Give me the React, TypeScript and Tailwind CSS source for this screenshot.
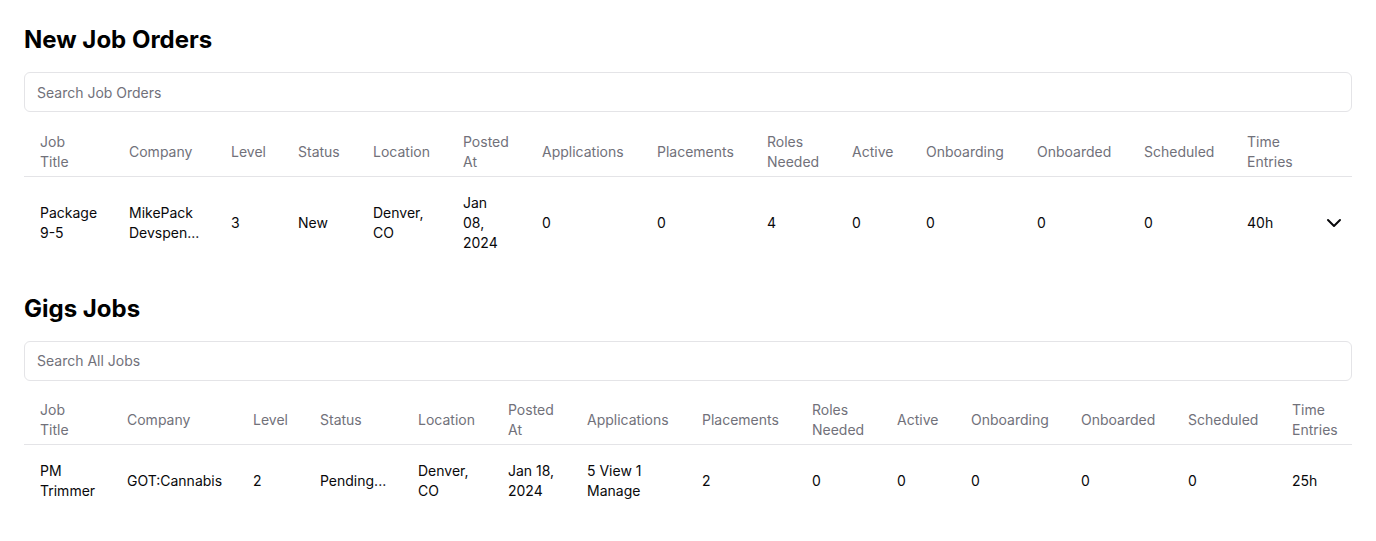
import React from 'react';
import { ChevronDown } from 'lucide-react';

interface JobRow {
  title: string;
  company: string;
  level: string;
  status: string;
  location: string;
  postedAt: string;
  applications: string;
  placements: string;
  rolesNeeded: string;
  active: string;
  onboarding: string;
  onboarded: string;
  scheduled: string;
  timeEntries: string;
}

const headers: React.ReactNode[] = [
  <>Job<br />Title</>,
  'Company',
  'Level',
  'Status',
  'Location',
  <>Posted<br />At</>,
  'Applications',
  'Placements',
  <>Roles<br />Needed</>,
  'Active',
  'Onboarding',
  'Onboarded',
  'Scheduled',
  <>Time<br />Entries</>,
];

const jobOrders: JobRow[] = [
  {
    title: 'Package 9-5',
    company: 'MikePack Devspen...',
    level: '3',
    status: 'New',
    location: 'Denver, CO',
    postedAt: 'Jan 08, 2024',
    applications: '0',
    placements: '0',
    rolesNeeded: '4',
    active: '0',
    onboarding: '0',
    onboarded: '0',
    scheduled: '0',
    timeEntries: '40h',
  },
];

const gigs: JobRow[] = [
  {
    title: 'PM Trimmer',
    company: 'GOT:Cannabis',
    level: '2',
    status: 'Pending...',
    location: 'Denver, CO',
    postedAt: 'Jan 18, 2024',
    applications: '5 View 1 Manage',
    placements: '2',
    rolesNeeded: '0',
    active: '0',
    onboarding: '0',
    onboarded: '0',
    scheduled: '0',
    timeEntries: '25h',
  },
];

function JobTable({
  rows,
  widths,
  expandable,
}: {
  rows: JobRow[];
  widths: number[];
  expandable?: boolean;
}) {
  return (
    <table className="w-full table-fixed border-collapse text-sm">
      <colgroup>
        {widths.map((w, i) => (
          <col key={i} style={{ width: w }} />
        ))}
      </colgroup>
      <thead>
        <tr className="border-b border-[#e4e4e7]">
          {headers.map((h, i) => (
            <th
              key={i}
              className="h-12 px-4 text-left align-middle font-normal leading-5 text-[#71717a]"
            >
              {h}
            </th>
          ))}
          {expandable && <th className="h-12" />}
        </tr>
      </thead>
      <tbody>
        {rows.map((r, i) => (
          <tr key={i}>
            {[
              r.title,
              r.company,
              r.level,
              r.status,
              r.location,
              r.postedAt,
              r.applications,
              r.placements,
              r.rolesNeeded,
              r.active,
              r.onboarding,
              r.onboarded,
              r.scheduled,
              r.timeEntries,
            ].map((v, j) => (
              <td key={j} className="p-4 align-middle leading-5 text-[#09090b]">
                {v}
              </td>
            ))}
            {expandable && (
              <td className="py-4 pl-[11px] align-middle">
                <ChevronDown className="h-6 w-6 text-[#09090b]" strokeWidth={2} />
              </td>
            )}
          </tr>
        ))}
      </tbody>
    </table>
  );
}

function Section({
  title,
  placeholder,
  children,
}: {
  title: string;
  placeholder: string;
  children: React.ReactNode;
}) {
  return (
    <section>
      <h2 className="text-2xl font-bold leading-8 text-black">{title}</h2>
      <input
        type="text"
        placeholder={placeholder}
        className="mt-4 h-10 w-full rounded-md border border-[#e4e4e7] bg-white px-3 text-sm text-[#09090b] placeholder:text-[#71717a] focus:outline-none"
      />
      <div className="mt-4">{children}</div>
    </section>
  );
}

export default function App() {
  return (
    <div
      className="min-h-screen bg-white px-6 pt-6"
      style={{ fontFamily: 'Inter, "Noto Sans", sans-serif' }}
    >
      <div className="flex flex-col gap-6">
        <Section title="New Job Orders" placeholder="Search Job Orders">
          <JobTable
            rows={jobOrders}
            widths={[89, 102, 67, 75, 90, 79, 115, 110, 85, 74, 111, 107, 103, 80, 41]}
            expandable
          />
        </Section>
        <Section title="Gigs Jobs" placeholder="Search All Jobs">
          <JobTable
            rows={gigs}
            widths={[87, 126, 67, 98, 90, 79, 115, 110, 85, 74, 110, 107, 104, 76]}
          />
        </Section>
      </div>
    </div>
  );
}
